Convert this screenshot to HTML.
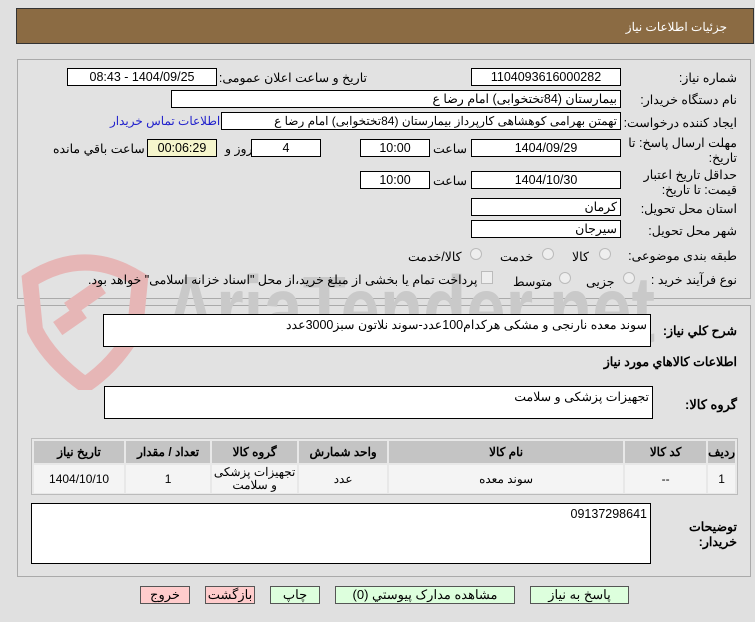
<!DOCTYPE html>
<html><head><meta charset="utf-8"><style>
*{box-sizing:border-box;margin:0;padding:0}
body{width:755px;height:622px;background:#e0e0e0;font-family:"Liberation Sans","Noto Sans CJK SC",sans-serif;font-size:12px;color:#000;position:relative;overflow:hidden}
.a{position:absolute}
.hdr{left:16px;top:8px;width:738px;height:36px;background:#8b6b43;border:1px solid #333}
.hdr span{position:absolute;right:26px;top:11px;color:#fff;font-size:12px}
.pan{border:1px solid #aaa;background:#e2e2e2}
.box{position:absolute;background:#fff;border:1px solid #000;direction:rtl;padding:0 3px;font-size:12.5px;line-height:16px;white-space:nowrap;overflow:hidden}
.c{text-align:center}
.l{position:absolute;direction:rtl;white-space:nowrap;font-size:12.5px}
.rad{position:absolute;width:12px;height:12px;border-radius:50%;border:1px solid #bbb;background:#eee}
table{border-collapse:separate;border-spacing:2px}
td,th{font-size:12px;text-align:center}
th{background:#c4c4c4;height:22px;font-weight:bold}
td{background:#f4f4f4;height:28px}
.btn{position:absolute;top:586px;height:18px;border:1px solid #555;font-size:13px;text-align:center;line-height:16px;direction:rtl}
.g{background:#ddffdd}.p{background:#ffcccc}
</style></head><body>
<div class="a hdr"><span>جزئیات اطلاعات نیاز</span></div>

<div class="a pan" style="left:17px;top:59px;width:734px;height:240px"></div>
<div class="a pan" style="left:17px;top:305px;width:734px;height:272px"></div>

<svg class="a" style="left:15px;top:250px" width="660" height="140">
<path d="M15 30 Q70 -5 125 30 L120 80 Q100 115 70 135 Q35 110 20 80 Z" fill="none" stroke="#e6b6b6" stroke-width="16"/>
<rect x="50" y="40" width="40" height="16" fill="#e6b6b6" transform="rotate(-35 70 48)"/>
<rect x="40" y="62" width="30" height="16" fill="#e6b6b6" transform="rotate(-35 55 70)"/>
<text x="150" y="92" font-family="Liberation Sans" font-weight="bold" font-size="95" fill="#c9c9c9" textLength="490" lengthAdjust="spacingAndGlyphs">AriaTender.net</text>
</svg>

<div class="l" style="right:18px;top:70px">شماره نیاز:</div>
<div class="box c" style="left:471px;top:68px;width:150px;height:18px">1104093616000282</div>
<div class="l" style="right:388px;top:70px">تاریخ و ساعت اعلان عمومی:</div>
<div class="box c" style="left:67px;top:68px;width:150px;height:18px">1404/09/25 - 08:43</div>

<div class="l" style="right:18px;top:92px">نام دستگاه خریدار:</div>
<div class="box" style="left:171px;top:90px;width:450px;height:18px">بیمارستان (84تختخوابی) امام رضا  ع</div>

<div class="l" style="right:18px;top:115px">ایجاد کننده درخواست:</div>
<div class="box" style="left:221px;top:112px;width:400px;height:18px;font-size:12px">تهمتن بهرامی کوهشاهی کارپرداز بیمارستان (84تختخوابی) امام رضا  ع</div>
<div class="l" style="left:110px;top:114px;color:#2222cc;font-size:12px">اطلاعات تماس خریدار</div>

<div class="l" style="right:18px;top:136px;text-align:right;line-height:15px">مهلت ارسال پاسخ: تا<br>تاریخ:</div>
<div class="box c" style="left:471px;top:139px;width:150px;height:18px">1404/09/29</div>
<div class="l" style="left:433px;top:141px">ساعت</div>
<div class="box c" style="left:360px;top:139px;width:70px;height:18px">10:00</div>
<div class="box c" style="left:251px;top:139px;width:70px;height:18px">4</div>
<div class="l" style="left:225px;top:141px">روز و</div>
<div class="box c" style="left:147px;top:139px;width:70px;height:18px;background:#f5f5cc">00:06:29</div>
<div class="l" style="left:53px;top:141px">ساعت باقي مانده</div>

<div class="l" style="right:18px;top:168px;text-align:right;line-height:15px">حداقل تاریخ اعتبار<br>قیمت: تا تاریخ:</div>
<div class="box c" style="left:471px;top:171px;width:150px;height:18px">1404/10/30</div>
<div class="l" style="left:433px;top:173px">ساعت</div>
<div class="box c" style="left:360px;top:171px;width:70px;height:18px">10:00</div>

<div class="l" style="right:18px;top:201px">استان محل تحویل:</div>
<div class="box" style="left:471px;top:198px;width:150px;height:18px">کرمان</div>
<div class="l" style="right:18px;top:223px">شهر محل تحویل:</div>
<div class="box" style="left:471px;top:220px;width:150px;height:18px">سیرجان</div>

<div class="l" style="right:18px;top:248px">طبقه بندی موضوعی:</div>
<div class="rad" style="left:599px;top:248px"></div><div class="l" style="left:572px;top:249px">کالا</div>
<div class="rad" style="left:542px;top:248px"></div><div class="l" style="left:500px;top:249px">خدمت</div>
<div class="rad" style="left:470px;top:248px"></div><div class="l" style="left:408px;top:249px">کالا/خدمت</div>

<div class="l" style="right:18px;top:272px">نوع فرآیند خرید :</div>
<div class="rad" style="left:623px;top:272px"></div><div class="l" style="left:586px;top:274px">جزیی</div>
<div class="rad" style="left:559px;top:272px"></div><div class="l" style="left:513px;top:274px">متوسط</div>
<div class="a" style="left:481px;top:271px;width:12px;height:13px;border:1px solid #bbb;background:#eee"></div>
<div class="l" style="left:88px;top:272px">پرداخت تمام یا بخشی از مبلغ خرید،از محل "اسناد خزانه اسلامی" خواهد بود.</div>

<div class="l" style="right:18px;top:323px;font-weight:bold">شرح كلي نياز:</div>
<div class="box" style="left:103px;top:314px;width:548px;height:33px;line-height:20px">سوند معده نارنجی و مشکی هرکدام100عدد-سوند نلاتون سبز3000عدد</div>
<div class="l" style="right:18px;top:354px;font-weight:bold">اطلاعات كالاهاي مورد نياز</div>
<div class="l" style="right:18px;top:397px;font-weight:bold;font-size:13px">گروه کالا:</div>
<div class="box" style="left:104px;top:386px;width:549px;height:33px;line-height:20px">تجهیزات پزشکی و سلامت</div>

<div class="a" style="left:31px;top:438px;width:707px;height:57px;border:1px solid #bbb;background:#e8e8e8">
<table dir="rtl" style="width:705px"><tr>
<th style="width:26px">رديف</th><th style="width:81px">کد کالا</th><th style="width:234px">نام کالا</th><th style="width:88px">واحد شمارش</th><th style="width:85px">گروه کالا</th><th style="width:84px">تعداد / مقدار</th><th>تاریخ نیاز</th></tr>
<tr><td>1</td><td>--</td><td>سوند معده</td><td>عدد</td><td style="line-height:13px">تجهیزات پزشکی و سلامت</td><td>1</td><td>1404/10/10</td></tr></table></div>

<div class="l" style="right:18px;top:520px;font-weight:bold;line-height:15px;text-align:right">توضیحات<br>خریدار:</div>
<div class="box" style="left:31px;top:503px;width:620px;height:61px;line-height:20px">09137298641</div>

<div class="btn p" style="left:140px;width:50px">خروج</div>
<div class="btn p" style="left:205px;width:50px">بازگشت</div>
<div class="btn g" style="left:270px;width:50px">چاپ</div>
<div class="btn g" style="left:335px;width:180px">مشاهده مدارک پیوستي (0)</div>
<div class="btn g" style="left:530px;width:99px">پاسخ به نیاز</div>
</body></html>
